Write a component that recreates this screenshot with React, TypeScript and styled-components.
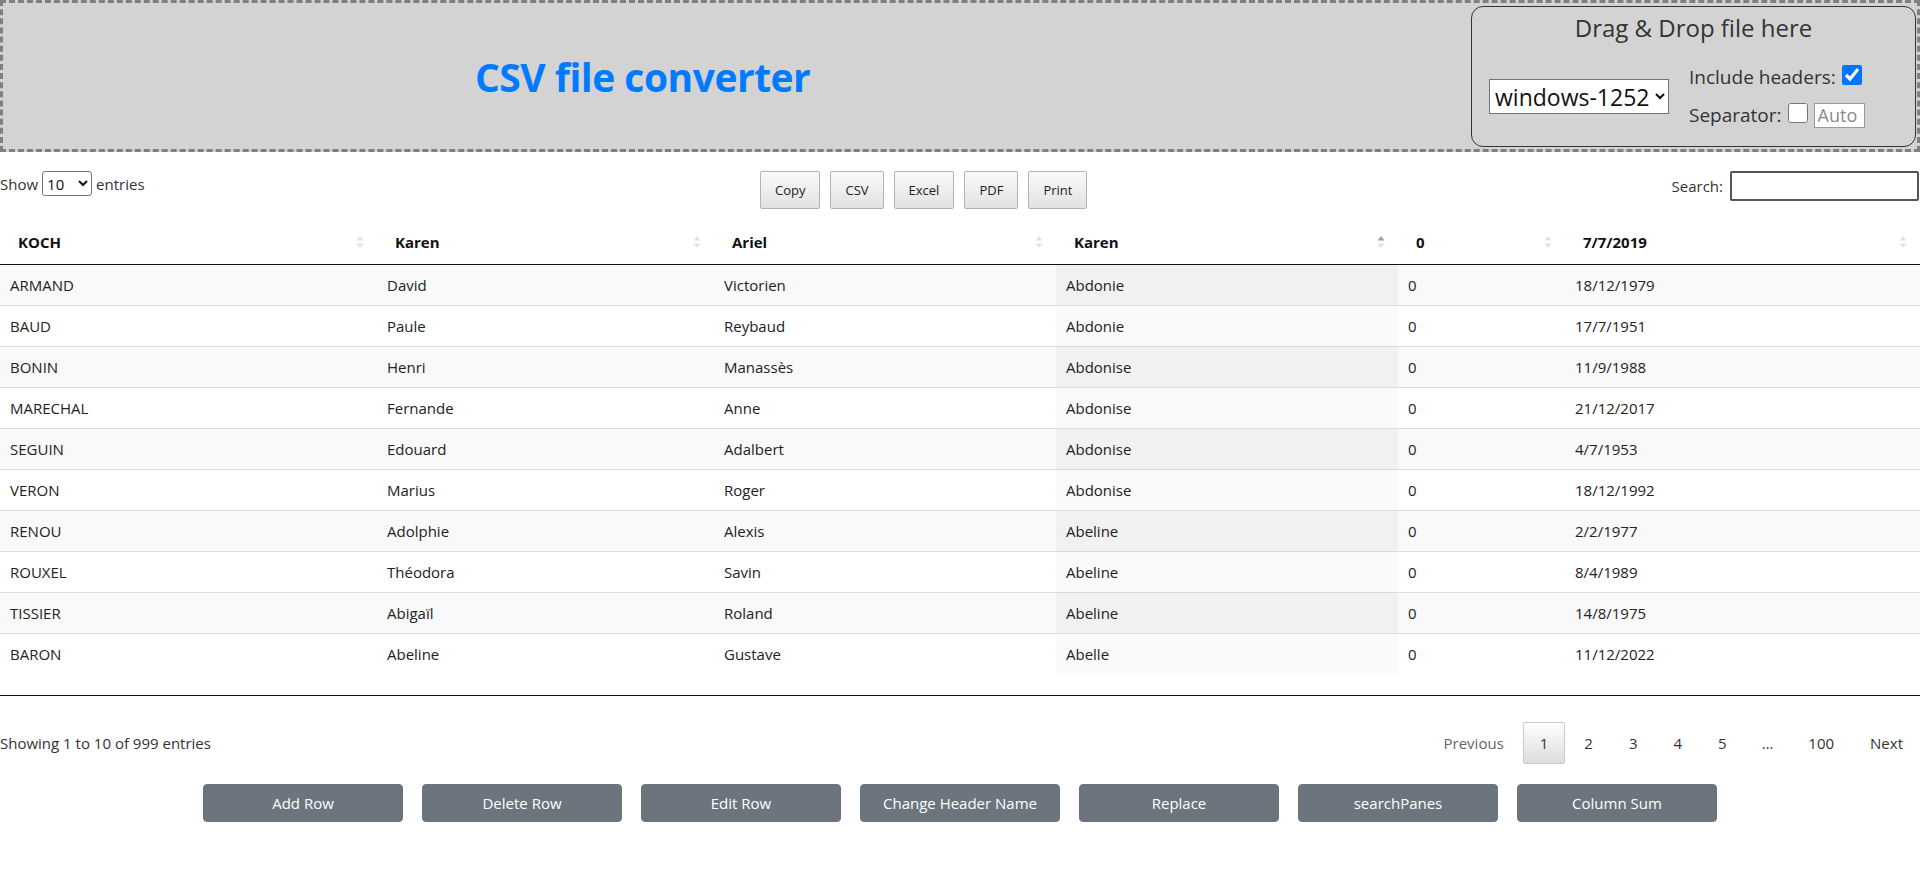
import React, { useState } from 'react';
import styled, { createGlobalStyle } from 'styled-components';

const FONT = `"Open Sans", "Noto Sans", "Liberation Sans", sans-serif`;

const GlobalStyle = createGlobalStyle`
  html, body {
    margin: 0;
    padding: 0;
    background: #fff;
  }
  body {
    font-family: ${FONT};
    font-size: 15px;
    color: #212529;
  }
  * {
    box-sizing: border-box;
  }
`;

const headers = ['KOCH', 'Karen', 'Ariel', 'Karen', '0', '7/7/2019'];
const colWidths = [377, 337, 342, 342, 167, 355];

const rows = [
  ['ARMAND', 'David', 'Victorien', 'Abdonie', '0', '18/12/1979'],
  ['BAUD', 'Paule', 'Reybaud', 'Abdonie', '0', '17/7/1951'],
  ['BONIN', 'Henri', 'Manassès', 'Abdonise', '0', '11/9/1988'],
  ['MARECHAL', 'Fernande', 'Anne', 'Abdonise', '0', '21/12/2017'],
  ['SEGUIN', 'Edouard', 'Adalbert', 'Abdonise', '0', '4/7/1953'],
  ['VERON', 'Marius', 'Roger', 'Abdonise', '0', '18/12/1992'],
  ['RENOU', 'Adolphie', 'Alexis', 'Abeline', '0', '2/2/1977'],
  ['ROUXEL', 'Théodora', 'Savin', 'Abeline', '0', '8/4/1989'],
  ['TISSIER', 'Abigaïl', 'Roland', 'Abeline', '0', '14/8/1975'],
  ['BARON', 'Abeline', 'Gustave', 'Abelle', '0', '11/12/2022'],
];

const actions = ['Add Row', 'Delete Row', 'Edit Row', 'Change Header Name', 'Replace', 'searchPanes', 'Column Sum'];
const exportButtons = ['Copy', 'CSV', 'Excel', 'PDF', 'Print'];
const SORTED_COL = 3;

const SortIcon = ({ active }: { active?: boolean }) => (
  <SortWrap viewBox="0 0 8 12" width="8" height="12">
    <polygon points="4,0 7.5,4.5 0.5,4.5" fill={active ? '#a0a0a0' : '#e2e2e2'} />
    <polygon points="0.5,7.5 7.5,7.5 4,12" fill="#e2e2e2" />
  </SortWrap>
);

const App = () => {
  const [includeHeaders, setIncludeHeaders] = useState(true);
  const [autoSep, setAutoSep] = useState(false);
  const [search, setSearch] = useState('');

  return (
    <>
      <GlobalStyle />
      <Header>
        <TitleCell>
          <Title>CSV file converter</Title>
        </TitleCell>
        <DropCell>
          <DropZone>
            <DropTitle>Drag &amp; Drop file here</DropTitle>
            <OptionsRow>
              <EncodingSelect defaultValue="windows-1252">
                <option>windows-1252</option>
                <option>utf-8</option>
              </EncodingSelect>
              <OptionsCol>
                <OptionLine>
                  Include headers:
                  <BigCheck
                    type="checkbox"
                    checked={includeHeaders}
                    onChange={e => setIncludeHeaders(e.target.checked)}
                  />
                </OptionLine>
                <OptionLine>
                  Separator:
                  <BigCheck type="checkbox" checked={autoSep} onChange={e => setAutoSep(e.target.checked)} />
                  <SepInput placeholder="Auto" />
                </OptionLine>
              </OptionsCol>
            </OptionsRow>
          </DropZone>
        </DropCell>
      </Header>

      <Toolbar>
        <LengthLabel>
          Show
          <LengthSelect defaultValue="10">
            <option>10</option>
            <option>25</option>
            <option>50</option>
            <option>100</option>
          </LengthSelect>
          entries
        </LengthLabel>
        <ExportGroup>
          {exportButtons.map(b => (
            <ExportButton key={b}>{b}</ExportButton>
          ))}
        </ExportGroup>
        <SearchLabel>
          Search:
          <SearchInput value={search} onChange={e => setSearch(e.target.value)} />
        </SearchLabel>
      </Toolbar>

      <DataTable>
        <colgroup>
          {colWidths.map((w, i) => (
            <col key={i} style={{ width: w }} />
          ))}
        </colgroup>
        <thead>
          <tr>
            {headers.map((h, i) => (
              <Th key={i}>
                {h}
                <SortIcon active={i === SORTED_COL} />
              </Th>
            ))}
          </tr>
        </thead>
      </DataTable>
      <ScrollBody>
        <DataTable>
          <colgroup>
            {colWidths.map((w, i) => (
              <col key={i} style={{ width: w }} />
            ))}
          </colgroup>
          <tbody>
            {rows.map((r, ri) => (
              <Tr key={ri} $odd={ri % 2 === 0} $first={ri === 0}>
                {r.map((c, ci) => (
                  <Td key={ci} $sorted={ci === SORTED_COL} $odd={ri % 2 === 0}>
                    {c}
                  </Td>
                ))}
              </Tr>
            ))}
          </tbody>
        </DataTable>
      </ScrollBody>

      <InfoBar>
        <Info>Showing 1 to 10 of 999 entries</Info>
        <Pager>
          <PageLink $muted>Previous</PageLink>
          <PageLink $current>1</PageLink>
          <PageLink>2</PageLink>
          <PageLink>3</PageLink>
          <PageLink>4</PageLink>
          <PageLink>5</PageLink>
          <Ellipsis>…</Ellipsis>
          <PageLink>100</PageLink>
          <PageLink>Next</PageLink>
        </Pager>
      </InfoBar>

      <ActionRow>
        {actions.map(a => (
          <ActionButton key={a}>{a}</ActionButton>
        ))}
      </ActionRow>
    </>
  );
};

export default App;

const Header = styled.header`
  display: grid;
  grid-template-columns: 2fr 1fr;
  height: 152px;
  padding: 3px 1px 2px 3px;
  background: #d3d3d3;
  border: 3px dashed #808080;
`;

const TitleCell = styled.div`
  display: flex;
  align-items: center;
  justify-content: center;
`;

const Title = styled.h1`
  margin: 0;
  font-family: ${FONT};
  font-size: 39px;
  font-weight: 700;
  color: #007bff;
  letter-spacing: -0.5px;
`;

const DropCell = styled.div`
  display: flex;
  justify-content: flex-end;
`;

const DropZone = styled.div`
  display: flex;
  flex-direction: column;
  align-items: center;
  width: 445px;
  height: 141px;
  padding-top: 5px;
  border: 1px solid #333;
  border-radius: 12px;
  background: #d3d3d3;
`;

const DropTitle = styled.div`
  font-size: 24px;
  line-height: 32px;
  color: #333;
`;

const OptionsRow = styled.div`
  display: flex;
  align-items: center;
  gap: 20px;
  align-self: stretch;
  margin-top: 19px;
  padding-left: 17px;
`;

const EncodingSelect = styled.select`
  width: 180px;
  height: 35px;
  font-family: ${FONT};
  font-size: 23px;
  color: #111;
  background: #fff;
  border: 1px solid #767676;
  border-radius: 0;
  padding: 0 1px;
`;

const OptionsCol = styled.div`
  display: flex;
  flex-direction: column;
  gap: 10px;
`;

const OptionLine = styled.label`
  display: flex;
  align-items: center;
  gap: 6px;
  height: 28px;
  font-size: 19px;
  color: #333;
`;

const BigCheck = styled.input`
  width: 20px;
  height: 20px;
  margin: 0;
  position: relative;
  top: -2px;
`;

const SepInput = styled.input`
  width: 51px;
  height: 25px;
  padding: 0 3px;
  font-family: ${FONT};
  font-size: 18px;
  border: 1px solid #9a9a9a;
  background: #fff;
  &::placeholder {
    color: #8a8a8a;
  }
`;

const Toolbar = styled.div`
  display: grid;
  grid-template-columns: 760px auto 1fr;
  align-items: start;
  margin-top: 19px;
  height: 38px;
`;

const LengthLabel = styled.label`
  display: flex;
  align-items: center;
  gap: 4px;
  height: 25px;
  font-size: 15px;
  color: #333;
`;

const LengthSelect = styled.select`
  width: 50px;
  height: 25px;
  font-family: ${FONT};
  font-size: 15px;
  color: #111;
  border: 1px solid #767676;
  border-radius: 3px;
  background: #fff;
`;

const ExportGroup = styled.div`
  display: flex;
  gap: 10px;
`;

const ExportButton = styled.button`
  height: 38px;
  padding: 0 14px;
  font-family: ${FONT};
  font-size: 13px;
  color: #222;
  border: 1px solid #b3b3b3;
  border-radius: 2px;
  background: linear-gradient(to bottom, #fafafa 0%, #e2e2e2 100%);
  cursor: pointer;
`;

const SearchLabel = styled.label`
  display: flex;
  justify-content: flex-end;
  align-items: center;
  gap: 7px;
  height: 30px;
  font-size: 15px;
  color: #333;
`;

const SearchInput = styled.input`
  width: 189px;
  height: 30px;
  margin-right: 1px;
  border: 2px solid #555;
  border-radius: 2px;
  font-family: ${FONT};
  font-size: 15px;
`;

const DataTable = styled.table`
  width: 100%;
  table-layout: fixed;
  border-collapse: collapse;
  margin-top: 11px;
`;

const Th = styled.th`
  position: relative;
  height: 44px;
  padding: 0 18px;
  text-align: left;
  font-size: 15px;
  font-weight: 700;
  color: #111;
  border-bottom: 1px solid #111;
`;

const SortWrap = styled.svg`
  position: absolute;
  right: 13px;
  top: 16px;
`;

const ScrollBody = styled.div`
  height: 431px;
  border-bottom: 1px solid #111;
  & > table {
    margin-top: 0;
  }
`;

const Tr = styled.tr<{ $odd: boolean; $first: boolean }>`
  background: ${p => (p.$odd ? '#f9f9f9' : '#fff')};
  border-top: ${p => (p.$first ? 'none' : '1px solid #ddd')};
`;

const Td = styled.td<{ $sorted: boolean; $odd: boolean }>`
  height: 41px;
  padding: 0 10px;
  font-size: 15px;
  color: #222;
  white-space: nowrap;
  background: ${p => (p.$sorted ? (p.$odd ? '#f1f1f1' : '#fafafa') : 'transparent')};
`;

const InfoBar = styled.div`
  display: flex;
  justify-content: space-between;
  align-items: center;
  padding-top: 26px;
`;

const Info = styled.div`
  font-size: 15px;
  color: #333;
`;

const Pager = styled.div`
  display: flex;
  align-items: center;
  gap: 2px;
`;

const PageLink = styled.span<{ $current?: boolean; $muted?: boolean }>`
  display: inline-flex;
  align-items: center;
  justify-content: center;
  height: 42px;
  padding: 0 16px;
  font-size: 15px;
  color: ${p => (p.$muted ? '#666' : '#333')};
  border: 1px solid ${p => (p.$current ? '#cacaca' : 'transparent')};
  border-radius: 2px;
  background: ${p => (p.$current ? 'linear-gradient(to bottom, #fff 0%, #dcdcdc 100%)' : 'transparent')};
  cursor: pointer;
`;

const Ellipsis = styled.span`
  padding: 0 16px;
  font-size: 15px;
  color: #333;
`;

const ActionRow = styled.div`
  display: flex;
  justify-content: center;
  gap: 19px;
  margin-top: 20px;
`;

const ActionButton = styled.button`
  width: 200px;
  height: 38px;
  font-family: ${FONT};
  font-size: 15px;
  color: #fff;
  background: #6c757d;
  border: 1px solid #6c757d;
  border-radius: 4px;
  cursor: pointer;
`;
